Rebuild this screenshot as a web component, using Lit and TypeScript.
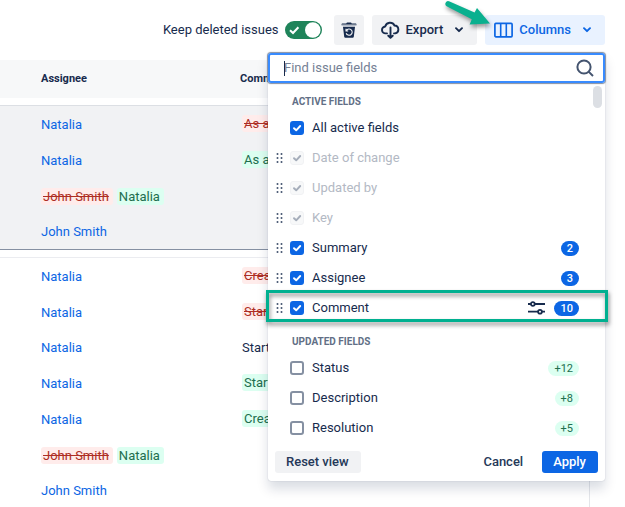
import { LitElement, html, css, svg, nothing } from "lit";
import { customElement, property } from "lit/decorators.js";
import { classMap } from "lit/directives/class-map.js";

type Part = { text: string; kind: "link" | "removed" | "added" | "plain" };
type Row = { assignee: Part[]; comment: Part[] };

const natalia: Part = { text: "Natalia", kind: "link" };
const john: Part = { text: "John Smith", kind: "link" };
const reassigned: Part[] = [
  { text: "John Smith", kind: "removed" },
  { text: "Natalia", kind: "added" },
];

const groups: Row[][] = [
  [
    { assignee: [natalia], comment: [{ text: "As a", kind: "removed" }] },
    { assignee: [natalia], comment: [{ text: "As a", kind: "added" }] },
    { assignee: reassigned, comment: [] },
    { assignee: [john], comment: [] },
  ],
  [
    { assignee: [natalia], comment: [{ text: "Created", kind: "removed" }] },
    { assignee: [natalia], comment: [{ text: "Started", kind: "removed" }] },
    { assignee: [natalia], comment: [{ text: "Started", kind: "plain" }] },
    { assignee: [natalia], comment: [{ text: "Started", kind: "added" }] },
    { assignee: [natalia], comment: [{ text: "Created", kind: "added" }] },
    { assignee: reassigned, comment: [] },
    { assignee: [john], comment: [] },
  ],
];

type Field = {
  name: string;
  checked?: boolean;
  locked?: boolean;
  fixed?: boolean;
  badge?: string;
  marked?: boolean;
};

const activeFields: Field[] = [
  { name: "All active fields", checked: true, fixed: true },
  { name: "Date of change", checked: true, locked: true },
  { name: "Updated by", checked: true, locked: true },
  { name: "Key", checked: true, locked: true },
  { name: "Summary", checked: true, badge: "2" },
  { name: "Assignee", checked: true, badge: "3" },
  { name: "Comment", checked: true, badge: "10", marked: true },
];

const updatedFields: Field[] = [
  { name: "Status", fixed: true, badge: "+12" },
  { name: "Description", fixed: true, badge: "+8" },
  { name: "Resolution", fixed: true, badge: "+5" },
];

const chevron = html`<svg width="8" height="6" viewBox="0 0 8 6" aria-hidden="true">
  <path d="M1 1.2 4 4.2 7 1.2" fill="none" stroke="currentColor" stroke-width="1.9" stroke-linecap="round" stroke-linejoin="round" />
</svg>`;

@customElement("history-table")
export class HistoryTable extends LitElement {
  static styles = css`
    :host {
      display: block;
      margin-right: 35px;
    }
    .table {
      width: 100%;
      border-spacing: 0;
      border-right: 1px solid #e4e6ea;
      table-layout: fixed;
    }
    .who {
      width: 199px;
    }
    .head {
      box-sizing: border-box;
      height: 38px;
      padding: 0 0 2px;
      background: #f7f8f9;
      font-size: 11px;
      font-weight: 700;
      text-align: left;
    }
    .lead {
      width: 41px;
    }
    .gap {
      height: 7px;
      padding: 0;
      border-bottom: 1px solid #ebecf0;
    }
    .gap.strong {
      border-color: #dcdfe4;
    }
    .cell {
      padding: 9px 0;
      line-height: 17px;
      white-space: nowrap;
    }
    .shaded .cell {
      background: #f1f2f4;
    }
    .shaded .row:last-child .cell {
      border-bottom: 1px solid #8590a2;
    }
    .link {
      color: #0c66e4;
      text-decoration: none;
    }
    .tag {
      display: inline-block;
      margin: 1px 2px 0 0;
      padding: 0 4px 0 2px;
      border-radius: 3px;
      vertical-align: top;
    }
    .comment .tag {
      margin: 0 0 1px 2px;
    }
    .tag + .tag {
      margin-left: 2px;
    }
    .removed {
      background: #ffeceb;
      color: #ae2e24;
      text-decoration: line-through;
    }
    .added {
      background: #dcfff1;
      color: #216e4e;
      text-decoration: none;
    }
    .plain {
      padding-left: 2px;
    }
  `;

  private part(p: Part) {
    if (p.kind === "link") return html`<a class="link" href="#">${p.text}</a>`;
    if (p.kind === "removed") return html`<del class="tag removed">${p.text}</del>`;
    if (p.kind === "added") return html`<ins class="tag added">${p.text}</ins>`;
    return html`<span class="plain">${p.text}</span>`;
  }

  render() {
    return html`<table class="table">
      <thead>
        <tr>
          <td class="head lead"></td>
          <th class="head who" scope="col">Assignee</th>
          <th class="head" scope="col">Comment</th>
        </tr>
      </thead>
      ${groups.map(
        (rows, i) => html`
          <tbody>
            <tr><td class=${classMap({ gap: true, strong: i === 0 })} colspan="3"></td></tr>
          </tbody>
          <tbody class=${classMap({ shaded: i === 0 })}>
            ${rows.map(
              (r) => html`<tr class="row">
                <td class="cell"></td>
                <td class="cell">${r.assignee.map((p) => this.part(p))}</td>
                <td class="cell comment">${r.comment.map((p) => this.part(p))}</td>
              </tr>`
            )}
          </tbody>
        `
      )}
    </table>`;
  }
}

@customElement("field-row")
export class FieldRow extends LitElement {
  @property({ attribute: false }) field!: Field;

  static styles = css`
    :host {
      display: block;
    }
    .row {
      position: relative;
      display: flex;
      align-items: center;
      height: 30px;
      padding: 0 26px 0 8px;
    }
    .grip {
      width: 8px;
      height: 12px;
      margin-right: 6px;
      fill: #44546f;
    }
    .pick {
      display: flex;
      flex: 1;
      align-items: center;
      gap: 8px;
    }
    .name {
      padding-bottom: 2px;
    }
    .check {
      display: grid;
      width: 14px;
      height: 14px;
    }
    .box,
    .tick {
      grid-area: 1 / 1;
      width: 14px;
      height: 14px;
    }
    .box {
      appearance: none;
      box-sizing: border-box;
      margin: 0;
      border: 2px solid #8590a2;
      border-radius: 3px;
      background: #fff;
    }
    .box:checked {
      border-color: #0c66e4;
      background: #0c66e4;
    }
    .box:disabled {
      border: 1px solid #f1f2f4;
      background: #f7f8f9;
    }
    .tick {
      color: #fff;
      pointer-events: none;
    }
    .locked .tick {
      color: #a5adba;
    }
    .locked .name {
      color: #b3b9c4;
    }
    .tune {
      display: flex;
      margin-right: 9px;
      padding: 0;
      border: 0;
      background: none;
      color: #172b4d;
    }
    .badge {
      padding: 0 6px;
      border-radius: 8px;
      background: #0c66e4;
      color: #fff;
      font-size: 11px;
      font-weight: 500;
      line-height: 15px;
    }
    .badge.more {
      background: #dcfff1;
      color: #216e4e;
      font-weight: 400;
    }
    .frame {
      position: absolute;
      inset: -3px -3px 1px -2px;
      border: 3px solid #00b090;
      filter: drop-shadow(1px 3px 2px rgb(0 0 0 / 45%));
      pointer-events: none;
    }
  `;

  render() {
    const f = this.field;
    return html`<div class=${classMap({ row: true, locked: !!f.locked })}>
      <svg class="grip" viewBox="0 0 8 12" aria-hidden="true">
        ${f.fixed
          ? nothing
          : [2, 6, 10].map(
              (y) => svg`<circle cx="1.5" cy=${y} r="1" /><circle cx="5.5" cy=${y} r="1" />`
            )}
      </svg>
      <label class="pick">
        <span class="check">
          <input class="box" type="checkbox" ?checked=${f.checked} ?disabled=${f.locked} />
          ${f.checked
            ? html`<svg class="tick" viewBox="0 0 14 14" aria-hidden="true">
                <path d="M4 7.2 6.2 9.3 10.2 5" fill="none" stroke="currentColor" stroke-width="1.9" stroke-linecap="round" stroke-linejoin="round" />
              </svg>`
            : nothing}
        </span>
        <span class="name">${f.name}</span>
      </label>
      ${f.marked
        ? html`<button class="tune" aria-label="Filter">
            <svg width="17" height="14" viewBox="0 0 17 14" fill="none" stroke="currentColor" stroke-width="1.8" aria-hidden="true">
              <path d="M0 3H2.8M6.8 3H17M0 10.7H10M14 10.7H17" />
              <circle cx="4.8" cy="3" r="1.9" />
              <circle cx="12" cy="10.7" r="1.9" />
            </svg>
          </button>`
        : nothing}
      ${f.badge
        ? html`<span class=${classMap({ badge: true, more: f.badge.startsWith("+") })}>${f.badge}</span>`
        : nothing}
      ${f.marked ? html`<div class="frame"></div>` : nothing}
    </div>`;
  }
}

@customElement("columns-menu")
export class ColumnsMenu extends LitElement {
  static styles = css`
    :host {
      display: block;
      border-radius: 3px;
      background: #fff;
      box-shadow: 0 8px 12px rgb(9 30 66 / 15%), 0 0 1px rgb(9 30 66 / 31%);
    }
    .search {
      position: relative;
      display: flex;
      align-items: center;
      box-sizing: border-box;
      height: 30px;
      padding: 0 9px 0 14px;
      border: 2px solid #388bff;
      border-radius: 3px;
      box-shadow: 0 0 1px 1px #8590a2;
    }
    .query {
      flex: 1;
      min-width: 0;
      padding: 0 0 2px;
      border: 0;
      outline: 0;
      background: none;
      color: #172b4d;
      font: inherit;
    }
    .query::placeholder {
      color: #758195;
      opacity: 1;
    }
    .caret {
      position: absolute;
      top: 6px;
      left: 14px;
      width: 1px;
      height: 15px;
      background: #172b4d;
    }
    .list {
      position: relative;
    }
    .thumb {
      position: absolute;
      top: 3px;
      right: 3px;
      width: 9px;
      height: 22px;
      border-radius: 5px;
      background: #dcdfe4;
    }
    .title {
      box-sizing: border-box;
      height: 30px;
      margin: 0;
      padding: 12px 24px 0;
      color: #626f86;
      font-size: 10px;
      font-weight: 700;
      line-height: 14px;
    }
    .foot {
      display: flex;
      align-items: center;
      padding: 8px 7px;
    }
    .button {
      height: 22px;
      padding: 0 12px 0 11px;
      border: 0;
      border-radius: 3px;
      background: none;
      color: #253858;
      font: 500 13px/22px Roboto, sans-serif;
    }
    .reset {
      margin-right: auto;
      background: #f1f2f4;
    }
    .cancel {
      margin-right: 7px;
    }
    .apply {
      background: #0c66e4;
      color: #fff;
    }
  `;

  render() {
    return html`
      <div class="search">
        <input class="query" type="text" placeholder="Find issue fields" aria-label="Find issue fields" />
        <span class="caret"></span>
        <svg width="18" height="18" viewBox="0 0 18 18" fill="none" stroke="#44546f" stroke-width="2" aria-hidden="true">
          <circle cx="8" cy="8" r="6.6" />
          <path d="M12.6 12.6 17 17" />
        </svg>
      </div>
      <div class="list">
        <h2 class="title">ACTIVE FIELDS</h2>
        ${activeFields.map((f) => html`<field-row .field=${f}></field-row>`)}
        <h2 class="title">UPDATED FIELDS</h2>
        ${updatedFields.map((f) => html`<field-row .field=${f}></field-row>`)}
        <div class="thumb"></div>
      </div>
      <div class="foot">
        <button class="button reset">Reset view</button>
        <button class="button cancel">Cancel</button>
        <button class="button apply">Apply</button>
      </div>
    `;
  }
}

@customElement("app-root")
export class AppRoot extends LitElement {
  static styles = css`
    :host {
      position: relative;
      display: block;
      height: 100vh;
      overflow: hidden;
      background: #fff;
      color: #172b4d;
      font: 13px/17px Roboto, sans-serif;
    }
    .bar {
      display: flex;
      align-items: center;
      justify-content: flex-end;
      gap: 8px;
      height: 60px;
      padding-right: 20px;
    }
    .keep {
      display: flex;
      align-items: center;
      gap: 6px;
      margin-right: 4px;
    }
    .caption {
      padding-bottom: 2px;
    }
    .toggle {
      display: grid;
      width: 37px;
      height: 18px;
    }
    .switch,
    .face {
      grid-area: 1 / 1;
      width: 37px;
      height: 18px;
    }
    .switch {
      appearance: none;
      margin: 0;
      border-radius: 9px;
      background: #1f845a;
    }
    .face {
      pointer-events: none;
    }
    .button {
      display: flex;
      align-items: center;
      height: 30px;
      padding: 0 14px 0 9px;
      border: 0;
      border-radius: 3px;
      background: #f1f2f4;
      color: #172b4d;
      font: 500 13px/17px Roboto, sans-serif;
    }
    .icon {
      justify-content: center;
      width: 30px;
      padding: 0;
    }
    .label {
      margin: 0 12px 0 6px;
      padding-bottom: 2px;
    }
    .active {
      background: #e9f2ff;
      color: #0c66e4;
    }
    .menu {
      position: absolute;
      top: 53px;
      right: 20px;
      width: 337px;
    }
    .pointer {
      position: absolute;
      top: 0;
      right: 129px;
      filter: drop-shadow(1px 3px 2px rgb(0 0 0 / 40%));
      pointer-events: none;
    }
  `;

  render() {
    return html`
      <div class="bar">
        <label class="keep">
          <span class="caption">Keep deleted issues</span>
          <span class="toggle">
            <input class="switch" type="checkbox" role="switch" checked />
            <svg class="face" viewBox="0 0 37 18" aria-hidden="true">
              <path d="M5 9.2 8 12 13.4 6.2" fill="none" stroke="#fff" stroke-width="2" />
              <circle cx="27.8" cy="9" r="7.8" fill="#fff" />
            </svg>
          </span>
        </label>
        <button class="button icon" aria-label="Deleted issues">
          <svg width="16" height="16" viewBox="0 0 16 16" aria-hidden="true">
            <path d="M.5 2.4C.5 1.6 1 1.4 1.6 1.4H5.2L6 .4H10L10.8 1.4H14.4C15 1.4 15.5 1.6 15.5 2.4Z" fill="#172b4d" />
            <path d="M.5 2.4H15.5V3.4H.5Z" fill="#626f86" />
            <path d="M2 4.8H14L12.8 14.8C12.7 15.5 12.3 15.8 11.6 15.8H4.4C3.7 15.8 3.3 15.5 3.2 14.8Z" fill="#172b4d" />
            <path d="M5.4 8.6A3.1 3.1 0 1 1 5.2 11.2M5 6.8V9H7.2" fill="none" stroke="#f1f2f4" stroke-width="1.1" />
          </svg>
        </button>
        <button class="button">
          <svg width="19" height="18" viewBox="0 0 19 18" fill="none" stroke="currentColor" stroke-width="1.9" stroke-linecap="round" stroke-linejoin="round" aria-hidden="true">
            <path d="M6 12.4H4.7A3.4 3.4 0 0 1 4.2 5.5 5 5 0 0 1 13.5 4.5 4 4 0 0 1 14.2 12.4H13" />
            <path d="M9.5 6.5V16.4M7.3 14.7 9.5 16.8 11.7 14.7" />
          </svg>
          <span class="label">Export</span>
          ${chevron}
        </button>
        <button class="button active" aria-expanded="true">
          <svg width="19" height="16" viewBox="0 0 19 16" fill="none" stroke="currentColor" aria-hidden="true">
            <rect x=".9" y="1.4" width="17.2" height="13.4" rx="1" stroke-width="1.7" />
            <path d="M6.7 1.4V14.8M12.3 1.4V14.8" stroke-width="1.6" />
          </svg>
          <span class="label">Columns</span>
          ${chevron}
        </button>
      </div>
      <history-table></history-table>
      <columns-menu class="menu"></columns-menu>
      <svg class="pointer" width="56" height="32" viewBox="0 0 56 32" aria-hidden="true">
        <path d="M9 1.2 34.6 12.6 37 8 50 23.4 29.6 24.6 31.8 19.2 6.6 6.2A2.8 2.8 0 0 1 9 1.2Z" fill="#0ab08f" />
      </svg>
    `;
  }
}
